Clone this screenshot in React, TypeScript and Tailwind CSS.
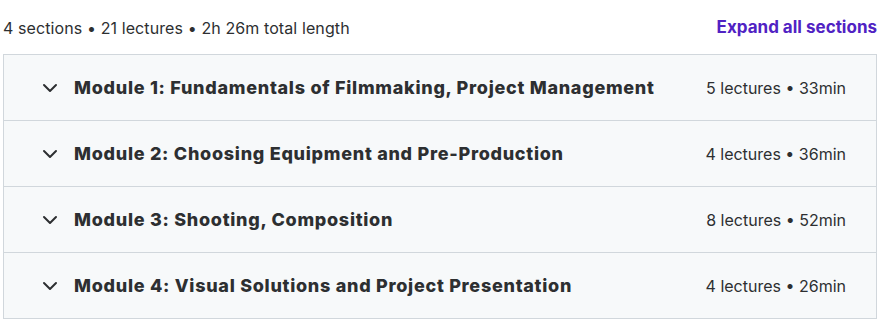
import { ChevronDown } from 'lucide-react';

const sections = [
  { title: 'Module 1: Fundamentals of Filmmaking, Project Management', lectures: 5, length: '33min' },
  { title: 'Module 2: Choosing Equipment and Pre-Production', lectures: 4, length: '36min' },
  { title: 'Module 3: Shooting, Composition', lectures: 8, length: '52min' },
  { title: 'Module 4: Visual Solutions and Project Presentation', lectures: 4, length: '26min' },
];

export default function App() {
  return (
    <div className="w-[883px] h-[324px] bg-white pl-[3px] pr-[6px] pt-[17px] text-[#2d2f31] font-['Inter',sans-serif]">
      <div className="flex items-center justify-between h-[22px] mb-[15px]">
        <span className="text-[16px] tracking-[0.1px]">4 sections • 21 lectures • 2h 26m total length</span>
        <button className="text-[17px] font-bold text-[#5022c3]">Expand all sections</button>
      </div>
      <div className="border border-[#d1d7dc]">
        {sections.map((s, i) => (
          <div
            key={s.title}
            className={`flex items-center bg-[#f7f9fa] pl-[34px] pr-[30px] ${i > 0 ? 'h-[66px] border-t border-[#d1d7dc]' : 'h-[65px]'}`}
          >
            <ChevronDown className="w-[24px] h-[24px] mr-[12px]" strokeWidth={2} />
            <span className="flex-1 text-[18px] font-extrabold tracking-[0.72px]">{s.title}</span>
            <span className="text-[16px]">
              {s.lectures} lectures • {s.length}
            </span>
          </div>
        ))}
      </div>
    </div>
  );
}
